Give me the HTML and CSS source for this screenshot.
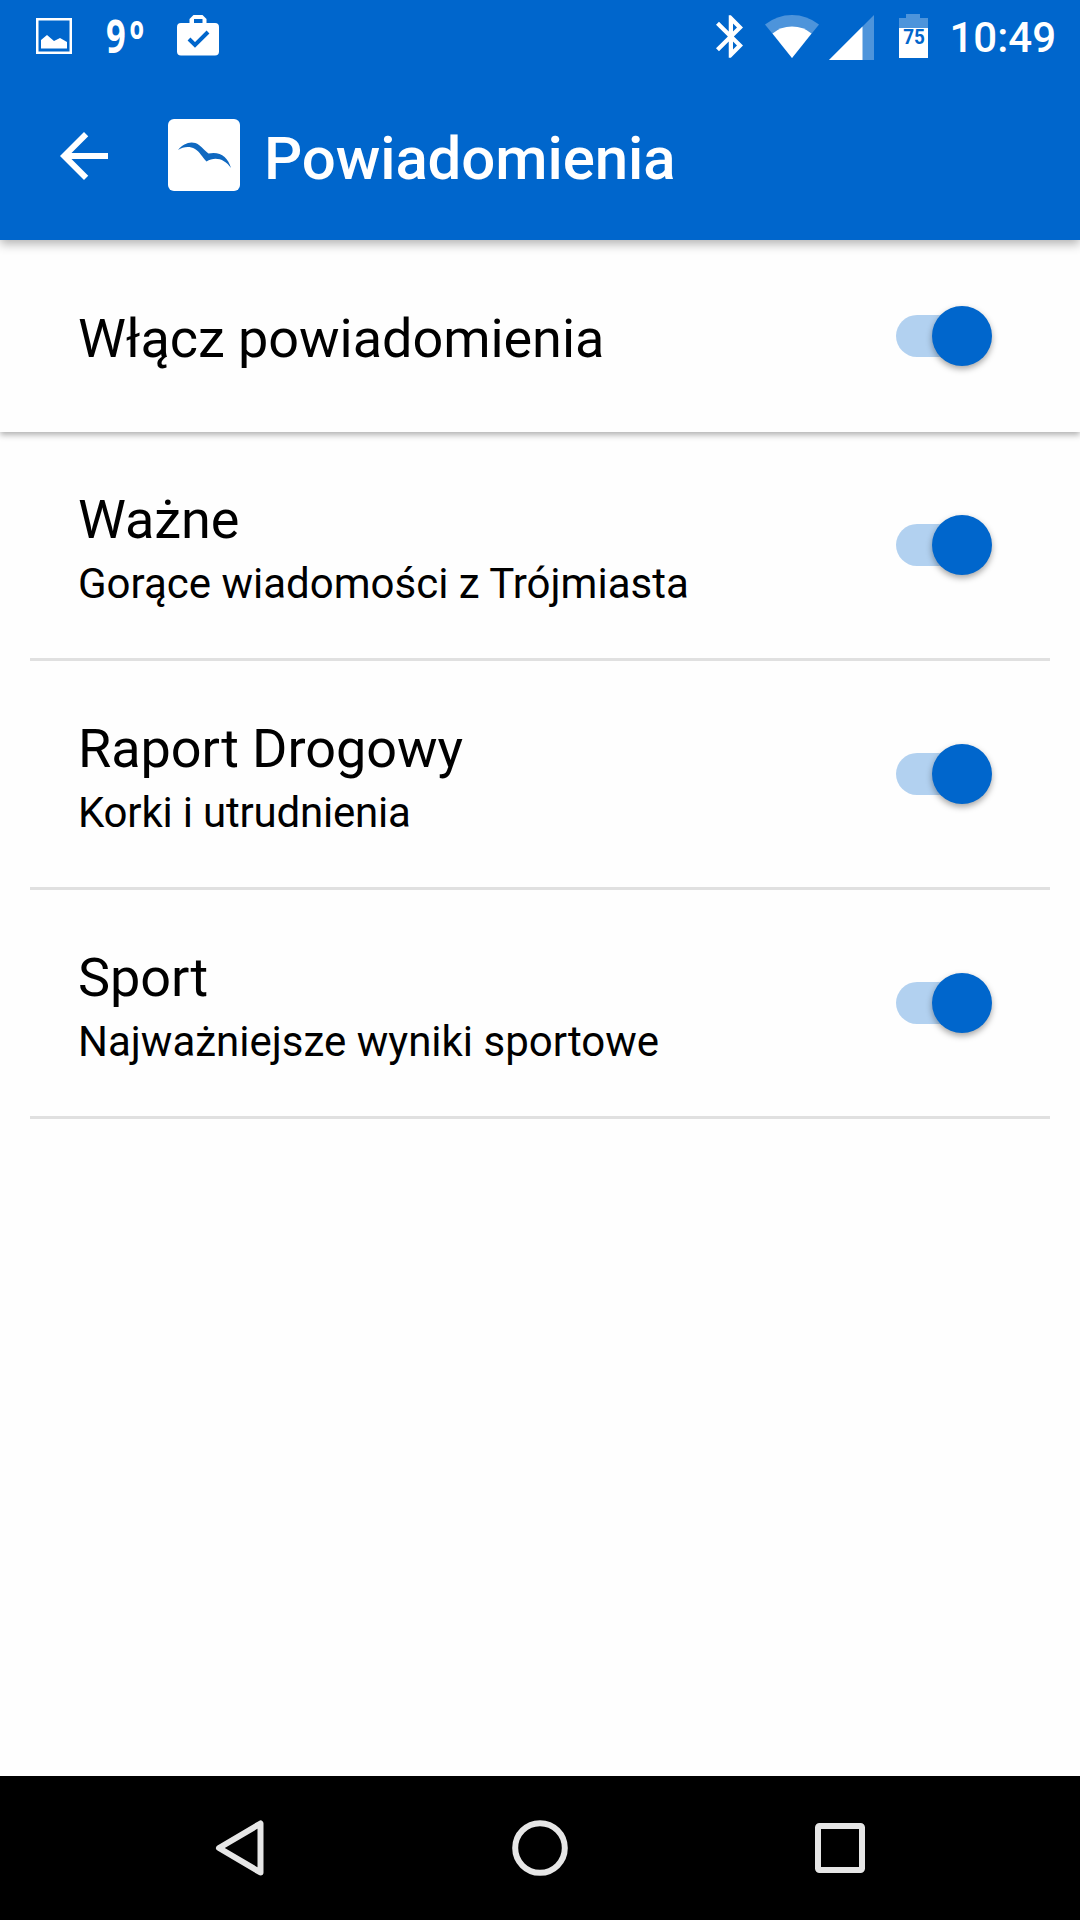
FILE: index.html
```html
<!DOCTYPE html>
<html lang="pl">
<head>
    <meta charset="UTF-8">
    <meta name="viewport" content="width=device-width, initial-scale=1.0">
    <title>Powiadomienia</title>
    <link rel="stylesheet" href="styles.css">
</head>
<body>
    <header class="header">
        <div class="status-bar">
            <svg class="icon-image" width="36" height="36" viewBox="0 0 36 36">
                <rect x="1.25" y="1.25" width="33.5" height="33.5" fill="none" stroke="#fff" stroke-width="2.5" />
                <path d="M5 30.5V22L11 17l7 6 6-3 7 4v6.500z" fill="#fff" />
            </svg>
            <span class="temperature">9<span class="degree">º</span></span>
            <svg class="icon-work" width="42" height="41" viewBox="0 0 42 41">
                <path fill="#fff" fill-rule="evenodd" d="M12.500 8V4l4-4h9l4 4v4H38a4 4 0 0 1 4 4v24.500a4 4 0 0 1-4 4H4a4 4 0 0 1-4-4V12a4 4 0 0 1 4-4zM17 8h8.500V4H17z" />
                <path d="M12 24l6 6 13-13" fill="none" stroke="#06c" stroke-width="4" />
            </svg>

            <div class="status-right">
                <svg class="icon-bluetooth" width="27" height="43" viewBox="5 2 12.710 20" fill="#fff">
                    <path d="M17.710 7.710L12 2h-1v7.590L6.410 5 5 6.410 10.590 12 5 17.590 6.410 19 11 14.410V22h1l5.710-5.710-4.300-4.290 4.300-4.290zM13 5.830l1.880 1.880L13 9.590V5.830zm1.880 10.460L13 18.170v-3.760l1.880 1.880z" />
                </svg>
                <svg class="icon-wifi" width="54" height="43" viewBox="0 0 54 43" fill="#fff">
                    <path opacity="0.3" d="M27 43L0 9.500Q12 0 27 0t27 9.500z" />
                    <path d="M27 43L7.500 18.500Q15.500 11.500 27 11.500t19.500 7z" />
                </svg>
                <svg class="icon-signal" width="45" height="45" viewBox="0 0 45 45" fill="#fff">
                    <path opacity="0.3" d="M0 45H45V0z" />
                    <path d="M0 45H33.500V11.500z" />
                </svg>
                <div class="battery">
                    <svg width="29" height="44" viewBox="0 0 29 44" fill="#fff">
                        <path opacity="0.3" d="M0 14V4h7V0h14v4h8v10z" />
                        <path d="M0 14h29v30H0z" />
                    </svg>
                    <span class="battery-level">75</span>
                </div>
                <span class="clock">10:49</span>
            </div>
        </div>

        <div class="app-bar">
            <svg class="back" width="72" height="72" viewBox="0 0 24 24" fill="#fff">
                <path d="M20 11H7.830l5.590-5.590L12 4l-8 8 8 8 1.410-1.410L7.830 13H20v-2z" />
            </svg>
            <svg class="logo" width="72" height="72" viewBox="0 0 72 72">
                <rect width="72" height="72" rx="6" fill="#fff" />
                <path d="M10 31C16 24 24 21 31 26C35 29 37 32 40.500 34.500C52 32 60 38 63 49C57 40 47 37 38.500 42.500C34 38 32 33 27 30C21 26.500 15 28 10 31z" fill="#0f68c0" />
            </svg>
            <h1>Powiadomienia</h1>
        </div>
    </header>

    <main>
        <section class="row row-main">
            <h2>Włącz powiadomienia</h2>
            <div class="switch"><div class="thumb"></div></div>
        </section>

        <section class="row">
            <div class="text">
                <h2>Ważne</h2>
                <p>Gorące wiadomości z Trójmiasta</p>
            </div>
            <div class="switch"><div class="thumb"></div></div>
        </section>

        <section class="row">
            <div class="text">
                <h2>Raport Drogowy</h2>
                <p class="tight">Korki i utrudnienia</p>
            </div>
            <div class="switch"><div class="thumb"></div></div>
        </section>

        <section class="row">
            <div class="text">
                <h2>Sport</h2>
                <p>Najważniejsze wyniki sportowe</p>
            </div>
            <div class="switch"><div class="thumb"></div></div>
        </section>
    </main>

    <!-- Android navigation buttons -->
    <nav class="nav">
        <svg width="60" height="60" viewBox="0 0 60 60">
            <path d="M9 30L50.500 5.500V54.500z" />
        </svg>
        <svg width="60" height="60" viewBox="0 0 60 60">
            <circle cx="30" cy="30" r="24.800" />
        </svg>
        <svg width="60" height="60" viewBox="0 0 60 60">
            <rect x="8" y="8" width="44" height="44" rx="1.500" />
        </svg>
    </nav>
</body>
</html>
```
FILE: styles.css
```css
/* Global Styles */
* {
    margin: 0;
    padding: 0;
    box-sizing: border-box;
}

body {
    background-color: #fefefe;
    color: #000;
    font-family: Roboto, sans-serif;
    height: 100vh;
    display: flex;
    flex-direction: column;
    overflow: hidden;
}

svg {
    display: block;
    flex-shrink: 0;
}

/* Header */
.header {
    height: 240px;
    background-color: #0066cc;
    color: white;
    box-shadow: 0 4px 10px rgba(0, 0, 0, 0.3);
    z-index: 1;
}

.status-bar {
    display: flex;
    align-items: center;
    height: 72px;
    padding: 0 24px 0 36px;
}

.temperature {
    display: flex;
    width: 40px;
    margin: 0 31px 0 34px;
    font-family: "Open Sans", sans-serif;
    font-size: 46px;
    font-weight: bold;
    line-height: 72px;
    white-space: nowrap;
    transform: scaleX(0.75);
    transform-origin: left;
}

.degree {
    margin: 3px 0 0 5px;
    font-size: 50px;
}

.icon-work {
    margin-top: -2px;
}

.status-right {
    display: flex;
    align-items: center;
    margin-left: auto;
}

.icon-wifi {
    margin-left: 22px;
}

.icon-signal {
    margin: 2px 25px 0 10px;
}

.battery {
    position: relative;
}

/* Percentage sits over the battery body */
.battery-level {
    position: absolute;
    top: 14px;
    left: 50%;
    color: #0066cc;
    font-size: 21px;
    font-weight: bold;
    line-height: 18px;
    transform: translateX(-50%) scaleX(0.9);
}

.clock {
    margin: 3px 0 0 21px;
    font-size: 42px;
    font-weight: 500;
}

.app-bar {
    display: flex;
    align-items: center;
    height: 168px;
    padding: 0 48px;
}

.logo {
    margin: -2px 24px 0 48px;
}

.app-bar h1 {
    padding-top: 6px;
    font-size: 60px;
    font-weight: 500;
    line-height: 70px;
    letter-spacing: -0.1px;
}

/* Settings rows */
main {
    flex: 1;
}

.row {
    display: flex;
    align-items: center;
    justify-content: space-between;
    height: 229px;
    margin: 0 30px;
    padding: 0 58px 0 48px;
    border-bottom: 3px solid #e0e0e0;
}

.row-main {
    height: 192px;
    margin: 0;
    padding: 0 88px 0 78px;
    border-bottom: none;
    box-shadow: 0 3px 6px rgba(0, 0, 0, 0.3);
}

.row h2 {
    font-size: 54px;
    font-weight: 400;
    line-height: 63px;
    letter-spacing: -0.05px;
}

.row-main h2 {
    padding-top: 5px;
}

.row p {
    margin-top: 8px;
    font-size: 42px;
    line-height: 49px;
}

.row .tight {
    letter-spacing: -0.2px;
}

.text {
    padding-top: 6px;
}

/* Switch */
.switch {
    display: flex;
    align-items: center;
    width: 96px;
    height: 42px;
    padding-left: 35.500px;
    border-radius: 21px;
    background: linear-gradient(to right, #b2d1f0 60px, transparent 60px);
}

.thumb {
    width: 60px;
    height: 60px;
    flex-shrink: 0;
    margin-top: -1px;
    border-radius: 50%;
    background-color: #0066cc;
    box-shadow: 0 3px 6px rgba(0, 0, 0, 0.35);
}

/* Navigation bar */
.nav {
    display: flex;
    align-items: center;
    justify-content: center;
    gap: 240px;
    height: 144px;
    background-color: black;
}

.nav svg {
    fill: none;
    stroke: #e6e6e6;
    stroke-width: 6;
    stroke-linejoin: round;
}
```
